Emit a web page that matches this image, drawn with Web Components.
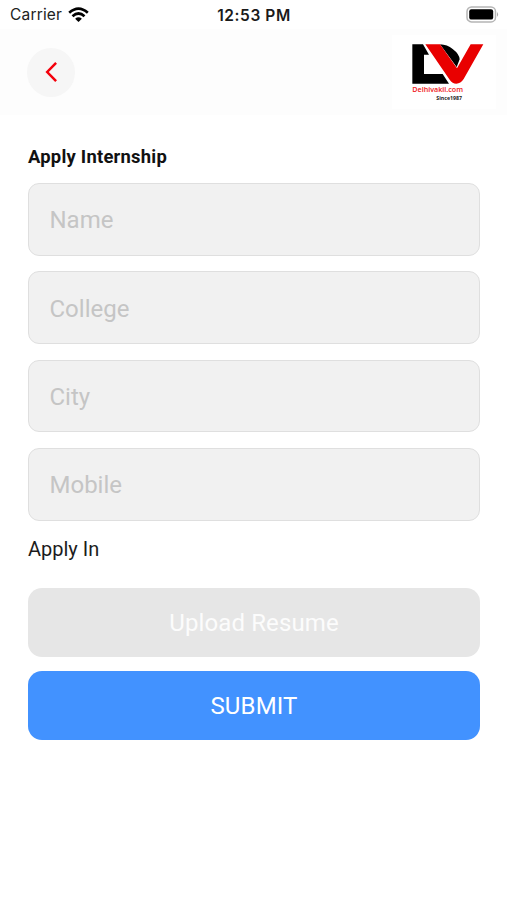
<!DOCTYPE html>
<html lang="en">
<head>
<meta charset="utf-8">
<title>Apply Internship</title>
<style>
html,body{margin:0;padding:0;background:#fff}
body{width:507px;height:900px;overflow:hidden;font-family:Roboto,sans-serif}
</style>
</head>
<body>
<internship-screen></internship-screen>
<script>
const define = (name, html) => customElements.define(name, class extends HTMLElement {
  constructor() {
    super();
    this.attachShadow({mode: 'open'}).innerHTML = html;
  }
});

define('status-bar', `<style>
:host{display:grid;grid-template-columns:1fr auto 1fr;align-items:center;height:29px;box-sizing:border-box;padding:1px 8px 0 10px;font:16px/20px Inter,sans-serif;color:#222}
.left{display:flex;align-items:center;gap:6px}
.name{font-size:15.5px;letter-spacing:.18px}
.time{font-weight:600;font-size:15.5px;letter-spacing:.58px;color:#1a1a1a;padding-top:1px;margin-right:1px}
.right{display:flex;justify-content:flex-end}
svg{display:block}
.right svg{margin-top:-2px}
.left svg{margin-top:-1px}
</style>
<div class="left"><span class="name">Carrier</span>
<svg width="21" height="16" viewBox="0 0 21 16"><g fill="none" stroke="#000" stroke-width="2.7"><path d="M1.2 5.7Q10.5-2.6 19.8 5.7"/><path d="M4.5 9.2Q10.5 3.8 16.5 9.2"/></g><path d="M7.1 11.7Q10.5 8.8 13.9 11.7L10.5 15Z"/></svg></div>
<span class="time">12:53 PM</span>
<div class="right"><svg width="33" height="17" viewBox="0 0 33 17"><rect x="1" y=".9" width="28.5" height="15" rx="4.5" fill="#fff" stroke="#b5b5b5" stroke-width="1.5"/><rect x="3.2" y="3.2" width="24" height="10.4" rx="2.2"/><path d="M31 6.1Q33.2 8.4 31 10.7Z" fill="#aaa"/></svg></div>`);

define('back-button', `<style>
:host{display:flex;align-items:center;justify-content:center;width:48px;height:49px;border-radius:50%;background:#f6f6f6}
svg{display:block}
</style>
<svg width="14" height="22" viewBox="0 0 14 22"><path d="M12.1 1.9L3.2 11L12.1 20.1" fill="none" stroke="#f4000c" stroke-width="2.5"/></svg>`);

define('brand-logo', `<style>
:host{display:block;width:104px;height:74px;background:#fff}
svg{display:block}
text{font-family:"Open Sans",sans-serif}
</style>
<svg width="104" height="74" viewBox="36 105 312 222">
<path d="M97 133H129L147 164H132V222H188L207 251H97Z"/>
<path d="M180 133Q202 134 218 147Q238 162 239 178L230 201Z"/>
<path fill="#e90000" d="M136 133H180L231 205L272 133H310L251 237Q242 251 229 251Q217 251 209 239Z"/>
<text x="97" y="276" font-size="20" font-weight="600" textLength="152" lengthAdjust="spacingAndGlyphs" fill="#f01620">Delhivakil.com</text>
<text x="169" y="299" font-size="13.5" font-weight="700" textLength="77" lengthAdjust="spacingAndGlyphs" fill="#222">Since1987</text>
</svg>`);

define('app-header', `<style>
:host{display:flex;align-items:center;justify-content:space-between;height:86px;box-sizing:border-box;padding:0 11px 0 27px;background:#fdfdfd}
</style><back-button></back-button><brand-logo></brand-logo>`);

define('form-field', `<style>
:host{display:flex;align-items:center;box-sizing:border-box;height:72.6px;padding:2px 20.5px 0;border:1.5px solid #dfdfdf;border-radius:11px;background:#f1f1f1;color:#c5c5c5;font-size:24px;line-height:28px}
</style><slot></slot>`);

define('action-button', `<style>
:host{display:flex;align-items:center;justify-content:center;box-sizing:border-box;height:69.4px;padding-top:2px;border-radius:14px;background:#e6e6e6;color:#fcfcfc;font-size:24px;line-height:28px}
:host([primary]){background:#4292ff;color:#fff;letter-spacing:.15px}
</style><slot></slot>`);

define('internship-screen', `<style>
:host{display:block}
main{display:flex;flex-direction:column;padding:30px 27px 0 28px}
h1{margin:0;font-size:18.4px;line-height:24px;font-weight:700;letter-spacing:.23px;color:#111}
.fields{display:flex;flex-direction:column;gap:15.8px;margin-top:14px}
.label{margin-top:16px;font-size:20px;line-height:24px;color:#1c1c1c}
.actions{display:flex;flex-direction:column;gap:13.6px;margin-top:27px}
.up{letter-spacing:.12px}
</style>
<status-bar></status-bar>
<app-header></app-header>
<main>
<h1>Apply Internship</h1>
<div class="fields"><form-field>Name</form-field><form-field>College</form-field><form-field>City</form-field><form-field>Mobile</form-field></div>
<div class="label">Apply In</div>
<div class="actions"><action-button><span class="up">Upload Resume</span></action-button><action-button primary>SUBMIT</action-button></div>
</main>`);
</script>
</body>
</html>
